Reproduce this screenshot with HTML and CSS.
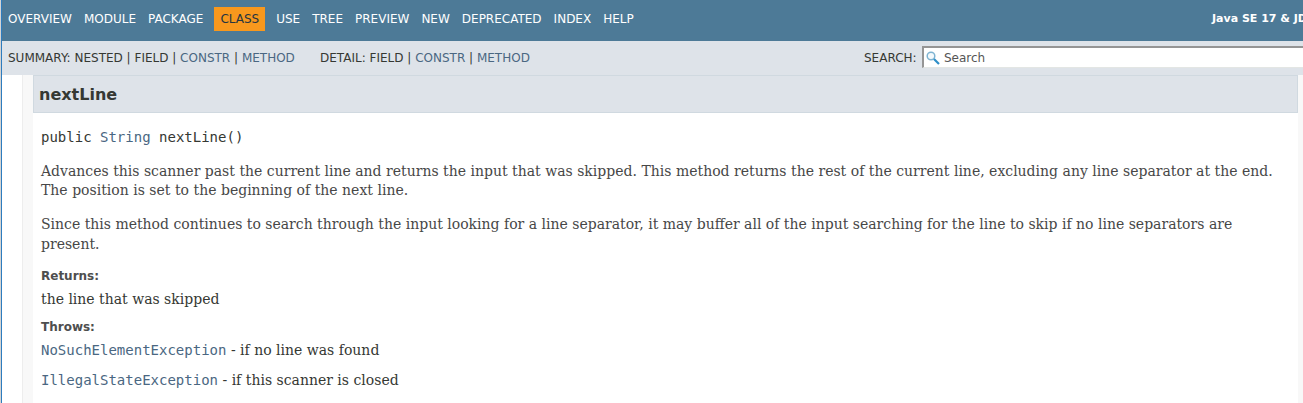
FILE: index.html
```html
<!DOCTYPE html>
<html lang="en">
<head>
<meta charset="utf-8">
<title>Scanner (Java SE 17 &amp; JDK 17)</title>
<link rel="stylesheet" href="styles.css">
</head>
<body>
<div class="page">
  <header>
    <nav class="top-nav">
      <ul class="nav-list">
        <li>OVERVIEW</li><li>MODULE</li><li>PACKAGE</li><li class="active">CLASS</li><li>USE</li><li>TREE</li><li>PREVIEW</li><li>NEW</li><li>DEPRECATED</li><li>INDEX</li><li>HELP</li>
      </ul>
      <div class="about">Java SE 17 &amp; JD</div>
    </nav>
    <div class="sub-nav">
      <div class="summary">SUMMARY: NESTED | FIELD | <a>CONSTR</a> | <a>METHOD</a></div>
      <div class="detail-nav">DETAIL: FIELD | <a>CONSTR</a> | <a>METHOD</a></div>
      <div class="search">
        <span class="search-label">SEARCH:</span>
        <div class="search-box">
          <svg class="glass" width="14" height="14" viewBox="0 0 14 14"><circle cx="5" cy="5" r="3.8" fill="#f4fafd" stroke="#7fb4d2" stroke-width="1.5"/><path d="M8 8l5 5" stroke="#2f8fc8" stroke-width="2.2"/></svg>
          <span>Search</span>
        </div>
      </div>
    </div>
  </header>
  <main class="content">
    <section class="member">
      <h3>nextLine</h3>
      <div class="signature">public <a>String</a> nextLine()</div>
      <p class="first">Advances this scanner past the current line and returns the input that was skipped. This method returns the rest of the current line, excluding any line separator at the end.<br>The position is set to the beginning of the next line.</p>
      <p class="second">Since this method continues to search through the input looking for a line separator, it may buffer all of the input searching for the line to skip if no line separators are<br>present.</p>
      <dl>
        <dt>Returns:</dt>
        <dd>the line that was skipped</dd>
        <dt>Throws:</dt>
        <dd><a>NoSuchElementException</a> - if no line was found</dd>
        <dd class="last"><a>IllegalStateException</a> - if this scanner is closed</dd>
      </dl>
    </section>
  </main>
</div>
</body>
</html>
```
FILE: styles.css
```css
* { box-sizing: border-box; }
body {
  margin: 0;
  height: 403px;
  overflow: hidden;
  background: #fff;
  color: #353833;
  font-family: "DejaVu Sans", sans-serif;
  font-size: 14px;
}
a { color: #4a6782; }
.page {
  height: 403px;
  display: flex;
  flex-direction: column;
  border-left: 1px solid #d4d4d4;
  overflow: hidden;
}
.page > * { border-left: 1px solid #2e7cbe; }
.top-nav {
  display: flex;
  justify-content: space-between;
  height: 41px;
  padding-top: 7px;
  background: #4d7a97;
  color: #fff;
  font-size: 12px;
  white-space: nowrap;
  overflow: hidden;
}
.nav-list {
  display: flex;
  margin: 0;
  padding: 0;
  list-style: none;
}
.nav-list li {
  height: 24px;
  padding: 5px 6px;
  line-height: 14px;
}
.nav-list .active {
  margin: 0 5px;
  background: #f8981d;
  color: #253441;
}
.about {
  flex: none;
  width: 91px;
  padding-top: 5px;
  font-size: 11px;
  font-weight: bold;
  line-height: 14px;
}
.sub-nav {
  display: flex;
  height: 34px;
  padding: 5px 0 0 6px;
  background: #dee3e9;
  font-size: 12px;
  line-height: 24px;
  white-space: nowrap;
  overflow: hidden;
}
.summary { width: 312px; }
.search {
  display: flex;
  flex: none;
  width: 439px;
  margin-left: auto;
}
.search-label { width: 58px; }
.search-box {
  display: flex;
  flex: 1;
  height: 22px;
  border: solid #959595;
  border-width: 2px 0 0 2px;
  border-bottom: 1px solid #e3e6e4;
  background: #fff;
  color: #555;
  line-height: 21px;
}
.glass { margin: 3px 4px 0 2px; }
.content {
  display: flex;
  flex: 1;
  padding-left: 21px;
}
.member {
  flex: 1;
  border: solid #f8f8f8;
  border-width: 0 5px 0 10px;
  box-shadow: -1px 0 #ededed;
}
h3 {
  height: 38px;
  margin: 0;
  padding-left: 5px;
  border: 1px solid #d0d9e0;
  background: #dee3e9;
  font-size: 16px;
  line-height: 37px;
}
.signature {
  margin: 14px 0 0 8px;
  font: 14px/20px "DejaVu Sans Mono", monospace;
}
p {
  margin: 0 0 0 8px;
  color: #474747;
  font: 14px/19px "DejaVu Serif", serif;
  white-space: nowrap;
}
.first { margin-top: 15px; word-spacing: 0.04px; }
.second { margin-top: 14px; line-height: 20px; }
dl { margin: 13px 0 0 8px; }
dt {
  height: 18px;
  color: #4e4e4e;
  font-size: 12px;
  font-weight: bold;
  line-height: 18px;
}
dd {
  height: 20px;
  margin: 4px 0 9px;
  font: 14px/20px "DejaVu Serif", serif;
}
dd a { font-family: "DejaVu Sans Mono", monospace; }
.last { margin-top: 10px; }
```
